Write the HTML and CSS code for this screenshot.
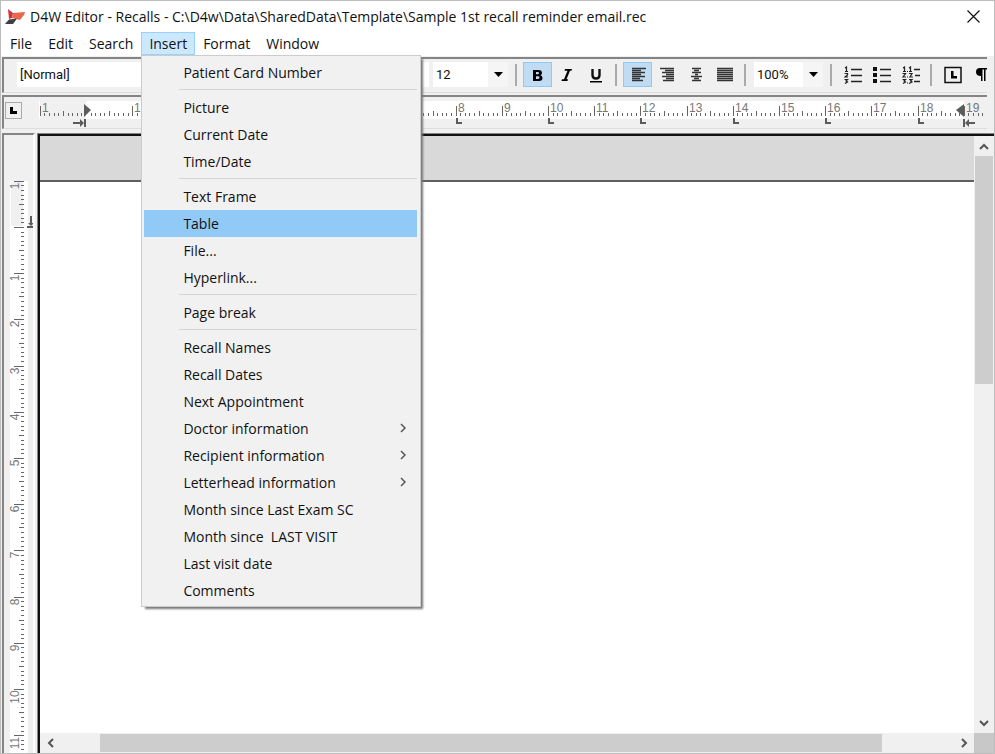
FILE: index.html
```html
<!DOCTYPE html>
<html lang="en">
<head>
<meta charset="utf-8">
<title>D4W Editor - Recalls</title>
<link rel="stylesheet" href="styles.css">
</head>
<body>
<div class="window">
  <header class="titlebar">
    <svg class="logo" width="20" height="16" viewBox="0 0 20 16" aria-hidden="true">
      <path d="M3 0 L8 4 L7 9 L4 10 Z" fill="#d5323f"/>
      <path d="M8 4 L20 3 L19 6 L15 11 L7 9 Z" fill="#e8694a"/>
      <path d="M4 10.500 L12 9.500 L8 15 L0 15 Z" fill="#3d3d42"/>
    </svg>
    <h1 class="title">D4W Editor - Recalls - C:\D4w\Data\SharedData\Template\Sample 1st recall reminder email.rec</h1>
    <button class="close" type="button" aria-label="Close">
      <svg width="13" height="13" viewBox="0 0 13 13"><path d="M.5 .5 L12.5 12.5 M12.5 .5 L.5 12.5" stroke="#111" stroke-width="1.2"/></svg>
    </button>
  </header>

  <nav class="menubar">
    <button type="button">File</button>
    <button type="button">Edit</button>
    <button type="button">Search</button>
    <div class="menu-host">
      <button type="button" class="open" aria-expanded="true">Insert</button>
      <ul class="menu">
        <li><button type="button">Patient Card Number</button></li>
        <li class="rule"></li>
        <li><button type="button">Picture</button></li>
        <li><button type="button">Current Date</button></li>
        <li><button type="button">Time/Date</button></li>
        <li class="rule"></li>
        <li><button type="button">Text Frame</button></li>
        <li><button type="button" class="selected">Table</button></li>
        <li><button type="button">File...</button></li>
        <li><button type="button">Hyperlink...</button></li>
        <li class="rule"></li>
        <li><button type="button">Page break</button></li>
        <li class="rule"></li>
        <li><button type="button">Recall Names</button></li>
        <li><button type="button">Recall Dates</button></li>
        <li><button type="button">Next Appointment</button></li>
        <li><button type="button">Doctor information<svg width="6" height="10" viewBox="0 0 6 10"><path d="M1 1 L5 5 L1 9"/></svg></button></li>
        <li><button type="button">Recipient information<svg width="6" height="10" viewBox="0 0 6 10"><path d="M1 1 L5 5 L1 9"/></svg></button></li>
        <li><button type="button">Letterhead information<svg width="6" height="10" viewBox="0 0 6 10"><path d="M1 1 L5 5 L1 9"/></svg></button></li>
        <li><button type="button">Month since Last Exam SC</button></li>
        <li><button type="button">Month since&nbsp; LAST VISIT</button></li>
        <li><button type="button">Last visit date</button></li>
        <li><button type="button">Comments</button></li>
      </ul>
    </div>
    <button type="button">Format</button>
    <button type="button">Window</button>
  </nav>

  <div class="bars">
    <div class="toolbar">
      <div class="combo style-combo">
        <select aria-label="Style"><option>[Normal]</option></select>
      </div>
      <div class="combo size-combo">
        <select aria-label="Font size"><option>12</option></select>
        <span class="drop"><svg width="9" height="5" viewBox="0 0 9 5"><path d="M0 0 H9 L4.500 5 Z"/></svg></span>
      </div>
      <span class="sep"></span>
      <button type="button" class="tool on" aria-label="Bold"><svg width="18" height="18" viewBox="0 0 18 18"><path fill-rule="evenodd" d="M4 4 H9.500 Q13 4 13 7 Q13 8.500 11.500 9.200 Q13.500 10 13.500 12 Q13.500 15 10 15 H4 Z M7 6 V8.300 H8.800 Q10 8.300 10 7.200 Q10 6 8.800 6 Z M7 10.200 V13 H9 Q10.500 13 10.500 11.600 Q10.500 10.200 9 10.200 Z"/></svg></button>
      <button type="button" class="tool" aria-label="Italic"><svg width="18" height="18" viewBox="0 0 18 18"><path d="M7 3 H14 L13.500 4.800 H12 L8.500 13.200 H10 L9.500 15 H3.500 L4 13.200 H6 L9.500 4.800 H6.500 Z"/></svg></button>
      <button type="button" class="tool" aria-label="Underline"><svg width="18" height="18" viewBox="0 0 18 18"><path d="M5.500 3 V9 Q5.500 12.500 9 12.500 Q12.500 12.500 12.500 9 V3" fill="none" stroke="#111" stroke-width="2.400"/><path d="M3 15 H15 V16.500 H3 Z"/></svg></button>
      <span class="sep"></span>
      <button type="button" class="tool on" aria-label="Align left"><svg class="lines" width="18" height="18" viewBox="0 0 18 18"><path d="M3 2.500H17M3 4.500H12M3 6.500H16M3 8.500H12M3 10.500H16M3 12.500H11M3 14.500H14"/></svg></button>
      <button type="button" class="tool" aria-label="Align right"><svg class="lines" width="18" height="18" viewBox="0 0 18 18"><path d="M2 2.500H16M7 4.500H16M4 6.500H16M8 8.500H16M4 10.500H16M8 12.500H16M5 14.500H16"/></svg></button>
      <button type="button" class="tool" aria-label="Center"><svg class="lines" width="18" height="18" viewBox="0 0 18 18"><path d="M5 2.500H14M7 4.500H12M5 6.500H14M8 8.500H11M4 10.500H15M7 12.500H12M5 14.500H14"/></svg></button>
      <button type="button" class="tool" aria-label="Justify"><svg class="lines" width="18" height="18" viewBox="0 0 18 18"><path d="M1 2.500H17M1 4.500H17M1 6.500H17M1 8.500H17M1 10.500H17M1 12.500H17M1 14.500H17"/></svg></button>
      <span class="sep"></span>
      <div class="combo zoom-combo">
        <select aria-label="Zoom"><option>100%</option></select>
        <span class="drop"><svg width="9" height="5" viewBox="0 0 9 5"><path d="M0 0 H9 L4.500 5 Z"/></svg></span>
      </div>
      <span class="sep"></span>
      <button type="button" class="tool" aria-label="Numbered list"><svg class="list" width="18" height="18" viewBox="0 0 18 18"><path d="M7 3.500H18M7 9.500H18M7 15.500H18"/><path class="digit" d="M1 2 L2.500 1 V5 M1 5.500H4 M.5 7.500H3.500V9L1 11H4M.5 13.500H3.500L2 15L3.500 16L1 17.500"/></svg></button>
      <button type="button" class="tool" aria-label="Bulleted list"><svg class="list" width="18" height="18" viewBox="0 0 18 18"><path d="M7 3.500H18M7 9.500H18M7 15.500H18"/><path class="fill" d="M0 1H4V5H0ZM0 7H4V11H0ZM0 13H4V17H0Z"/></svg></button>
      <button type="button" class="tool" aria-label="Multilevel list"><svg class="list" width="18" height="18" viewBox="0 0 18 18"><path d="M12 3.500H18M13 9.500H18M12 15.500H18"/><path class="digit" d="M1 2L2.500 1V5M1 5.500H4M5 5.500H6M7 2L8.500 1V5M7 5.500H10M.5 7.500H3.500L1 11H4M5 11H6M7 7.500H10L8 11H11M.5 13.500H3.500L2 15L3.500 16L1 17.500M5 17H6M7 13.500H10L8.500 15L10 16L7 17.500"/></svg></button>
      <span class="sep"></span>
      <button type="button" class="tool" aria-label="Tabs"><svg width="18" height="18" viewBox="0 0 18 18"><path d="M1 1.500H17V16.500H1Z" fill="none" stroke="#111" stroke-width="1.500"/><path d="M7 5H9.500V10H13V12.500H7Z"/></svg></button>
      <button type="button" class="tool" aria-label="Paragraph marks"><svg width="18" height="18" viewBox="0 0 18 18"><path d="M14.500 2H7Q3 2 3 6Q3 10 8 10V15H9.500V3.500H11V15H12.500V3.500H14.500Z"/></svg></button>
    </div>
    <div class="ruler-bar">
      <button type="button" class="tab-kind" aria-label="Tab type"><svg width="7" height="7" viewBox="0 0 7 7"><path d="M0 0H3V4H7V7H0Z"/></svg></button>
      <div class="h-ruler"><svg id="h-ruler" width="947" height="28"></svg></div>
    </div>
  </div>

  <main class="workspace">
    <aside class="v-ruler"><svg id="v-ruler" width="28" height="618"></svg></aside>
    <section class="document">
      <div class="page-view">
        <div class="page-gap"></div>
        <div class="page" contenteditable="true" aria-label="Document"></div>
      </div>
      <div class="scroll vertical">
        <button type="button" aria-label="Scroll up"><svg width="10" height="7" viewBox="0 0 10 7"><path d="M1 6L5 2L9 6"/></svg></button>
        <div class="track"><div class="thumb"></div></div>
        <button type="button" aria-label="Scroll down"><svg width="10" height="7" viewBox="0 0 10 7"><path d="M1 1L5 5L9 1"/></svg></button>
      </div>
      <div class="scroll horizontal">
        <button type="button" aria-label="Scroll left"><svg width="7" height="10" viewBox="0 0 7 10"><path d="M6 1L2 5L6 9"/></svg></button>
        <div class="track"><div class="thumb"></div></div>
        <button type="button" aria-label="Scroll right"><svg width="7" height="10" viewBox="0 0 7 10"><path d="M1 1L5 5L1 9"/></svg></button>
      </div>
      <div class="corner"></div>
    </section>
  </main>
</div>
<script src="rulers.js"></script>
</body>
</html>
```
FILE: styles.css
```css
* { box-sizing: border-box; }

body {
  margin: 0;
  font-family: "Open Sans", "Noto Sans", sans-serif;
  font-size: 14px;
  color: #111;
}

button, select { font: inherit; color: inherit; }

button {
  margin: 0;
  padding: 0;
  border: 0;
  background: none;
}

.window {
  display: flex;
  flex-direction: column;
  height: 100vh;
  overflow: hidden;
  border: 1px solid #bdbdbd;
  background: #fff;
}

.titlebar {
  display: flex;
  align-items: center;
  gap: 5px;
  flex: none;
  height: 31px;
  padding: 0 14px 0 4px;
}

.title {
  flex: 1;
  margin: 0;
  font-size: 14px;
  font-weight: 400;
  white-space: nowrap;
}

.close, .tool, .tab-kind {
  display: flex;
  align-items: center;
  justify-content: center;
}

.menubar {
  display: flex;
  flex: none;
  height: 24px;
  padding-left: 1px;
}

.menubar > button, .menu-host > button {
  height: 23px;
  padding: 0 8px;
  line-height: 21px;
}

.menu-host { position: relative; }

.menu-host > .open {
  padding: 0 7px;
  border: 1px solid #99d1ff;
  background: #cce8ff;
}

.menu {
  position: absolute;
  z-index: 2;
  top: 23px;
  left: 0;
  width: 280px;
  margin: 0;
  padding: 3px 3px 2px 2px;
  list-style: none;
  border: 1px solid #ccc;
  background: #f1f1f1;
  box-shadow: 3px 3px 2px -1px #777;
}

.menu button {
  display: flex;
  align-items: center;
  justify-content: space-between;
  width: 100%;
  height: 27px;
  padding: 0 11px 1px 39px;
  white-space: nowrap;
}

.menu .selected { background: #91c9f7; }

.menu svg, .scroll svg {
  fill: none;
  stroke: #555;
  stroke-width: 1.5;
}

.menu .rule {
  height: 8px;
  margin-left: 35px;
  border-top: 3px solid #f1f1f1;
}

.menu .rule::before {
  content: "";
  display: block;
  height: 1px;
  background: #d5d5d5;
}

.bars {
  flex: none;
  padding: 1px 7px 0 1px;
  background: #f0f0f0;
}

.toolbar {
  display: flex;
  align-items: center;
  height: 36px;
  padding: 0 0 2px 11px;
  overflow: hidden;
  border-top: 2px solid #858585;
  border-left: 2px solid #858585;
  border-bottom: 1px solid #ddd;
}

.combo {
  display: flex;
  flex: none;
  height: 25px;
  margin: 0 2px;
  background: #fff;
}

.combo select {
  flex: 1;
  min-width: 0;
  padding: 0 3px;
  border: 0;
  background: #fff;
  appearance: none;
  font-family: Roboto, sans-serif;
  font-size: 13px;
}

.style-combo { width: 412px; }
.size-combo { width: 75px; }
.zoom-combo { width: 69px; }

.drop {
  display: flex;
  flex: none;
  align-items: center;
  justify-content: center;
  width: 20px;
  background: #f5f5f5;
}

.sep {
  flex: none;
  width: 2px;
  height: 22px;
  margin: 0 6px 0 5px;
  background: #aaa;
}

.tool {
  flex: none;
  width: 29px;
  height: 25px;
}

.tool.on {
  border: 1px solid #90c8f6;
  background: #c0dcf3;
}

.lines { stroke: #333; stroke-width: 1.4; }
.list { fill: none; stroke: #222; stroke-width: 1.5; }
.list .digit { stroke-width: 1.2; }
.list .fill { fill: #111; stroke: none; }

.ruler-bar {
  display: flex;
  height: 34px;
  margin-top: 2px;
  padding-left: 1px;
  border-top: 2px solid #858585;
  border-left: 2px solid #858585;
  border-bottom: 1px solid #ddd;
}

.tab-kind {
  flex: none;
  width: 17px;
  height: 17px;
  margin: 5px 17px 0 0;
  border: 1px solid #aaa;
}

.h-ruler {
  flex: 1;
  min-width: 0;
  margin-top: 4px;
  overflow: hidden;
}

.h-ruler svg, .v-ruler svg { display: block; }

.ticks { stroke: #666; fill: none; }
.label { font: 12px "Liberation Sans", sans-serif; fill: #777; }
.paper { fill: #fff; }
.margin { fill: #f0f0f0; }
.marker { fill: #5c5c5c; }

.workspace {
  display: flex;
  flex: 1;
  gap: 2px;
  min-height: 0;
  padding-top: 4px;
  padding-left: 1px;
  background: #f0f0f0;
}

.v-ruler {
  flex: none;
  width: 33px;
  padding-left: 5px;
  overflow: hidden;
  border-top: 2px solid #858585;
  border-left: 2px solid #858585;
  border-right: 2px solid #fff;
}

.document {
  display: grid;
  flex: 1;
  grid-template: minmax(0, 1fr) 20px / minmax(0, 1fr) 20px;
  min-width: 0;
  border: solid #858585;
  border-width: 1px 0 0 1px;
  box-shadow: inset 2px 2px #111;
  padding: 2px 0 0 2px;
}

.page-view {
  display: flex;
  flex-direction: column;
  background: #fff;
}

.page-gap {
  height: 46px;
  border-bottom: 2px solid #606060;
  background: #d9d9d9;
}

.page { flex: 1; }

.scroll {
  display: flex;
  background: #f0f0f0;
}

.scroll button {
  display: flex;
  flex: none;
  align-items: center;
  justify-content: center;
  width: 20px;
  height: 20px;
}

.scroll svg { stroke-width: 2; }
.scroll.vertical { flex-direction: column; }
.scroll .track { display: flex; flex: 1; }
.vertical .track { flex-direction: column; }
.thumb { background: #cdcdcd; }
.vertical .thumb { height: 41%; margin: 0 1px; }
.horizontal .thumb { width: 87.5%; margin: 1px 0 1px 4.5%; }
.corner { background: #c8c8c8; }
```
FILE: rulers.js
```js
(function () {
  var NS = "http://www.w3.org/2000/svg";
  var UNIT = 46.2;

  function add(parent, tag, attrs, text) {
    var node = document.createElementNS(NS, tag);
    for (var key in attrs) node.setAttribute(key, attrs[key]);
    if (text !== undefined) node.textContent = text;
    parent.appendChild(node);
  }

  // Tick length: whole centimetre, half, tenth.
  function tickLength(i) {
    return i % 10 === 0 ? 10 : i % 5 === 0 ? 5 : 3;
  }

  var h = document.getElementById("h-ruler");
  add(h, "rect", { class: "paper", width: 947, height: 18 });
  add(h, "rect", { class: "margin", x: 1, width: 46, height: 18 });
  add(h, "rect", { class: "margin", x: 925, width: 22, height: 18 });
  var d = "";
  for (var i = -10; i < 195; i++) {
    if (i === 0) continue;
    var x = Math.round(47 + i * UNIT / 10) + 0.5;
    d += "M" + x + " 15v-" + tickLength(i);
  }
  add(h, "path", { class: "ticks", d: d });
  for (i = -1; i < 20; i++) {
    if (i === 0) continue;
    x = Math.round(47 + i * UNIT);
    add(h, "text", { class: "label", x: x + 2, y: 11 }, Math.abs(i));
    if (i > 0 && i < 19 && i % 2 === 0) {
      add(h, "path", { class: "marker", d: "M" + x + " 17h2v4h4v2h-6z" });
    }
  }
  add(h, "path", { class: "marker", d: "M45 3L52 9L45 16Z" });
  add(h, "path", { class: "marker", d: "M34 21h7v-3l4 4l-4 4v-3h-7zM45 18h2v8h-2z" });
  add(h, "path", { class: "marker", d: "M925 3L917 9L925 16Z" });
  add(h, "path", { class: "marker", d: "M924 18h2v8h-2zM936 21h-6v-3l-4 4l4 4v-3h6z" });

  var v = document.getElementById("v-ruler");
  add(v, "rect", { class: "paper", x: 1, y: 46, width: 18, height: 572 });
  add(v, "rect", { class: "margin", x: 2, y: 47, width: 12, height: 44 });
  d = "";
  for (i = -10; i < 114; i++) {
    var y = Math.round(92 + i * UNIT / 10) + 0.5;
    d += "M15 " + y + "h-" + tickLength(i);
  }
  add(v, "path", { class: "ticks", d: d });
  for (i = -1; i < 12; i++) {
    if (i === 0) continue;
    y = Math.round(92 + i * UNIT);
    add(v, "text", {
      class: "label", "text-anchor": "middle",
      transform: "translate(10 " + (y + (Math.abs(i) > 9 ? 8 : 5)) + ") rotate(-90)"
    }, Math.abs(i));
  }
  add(v, "path", { class: "marker", d: "M21 81h2v7h2l-3 3l-3-3h2zM18 91h7v2h-7z" });
})();
```
